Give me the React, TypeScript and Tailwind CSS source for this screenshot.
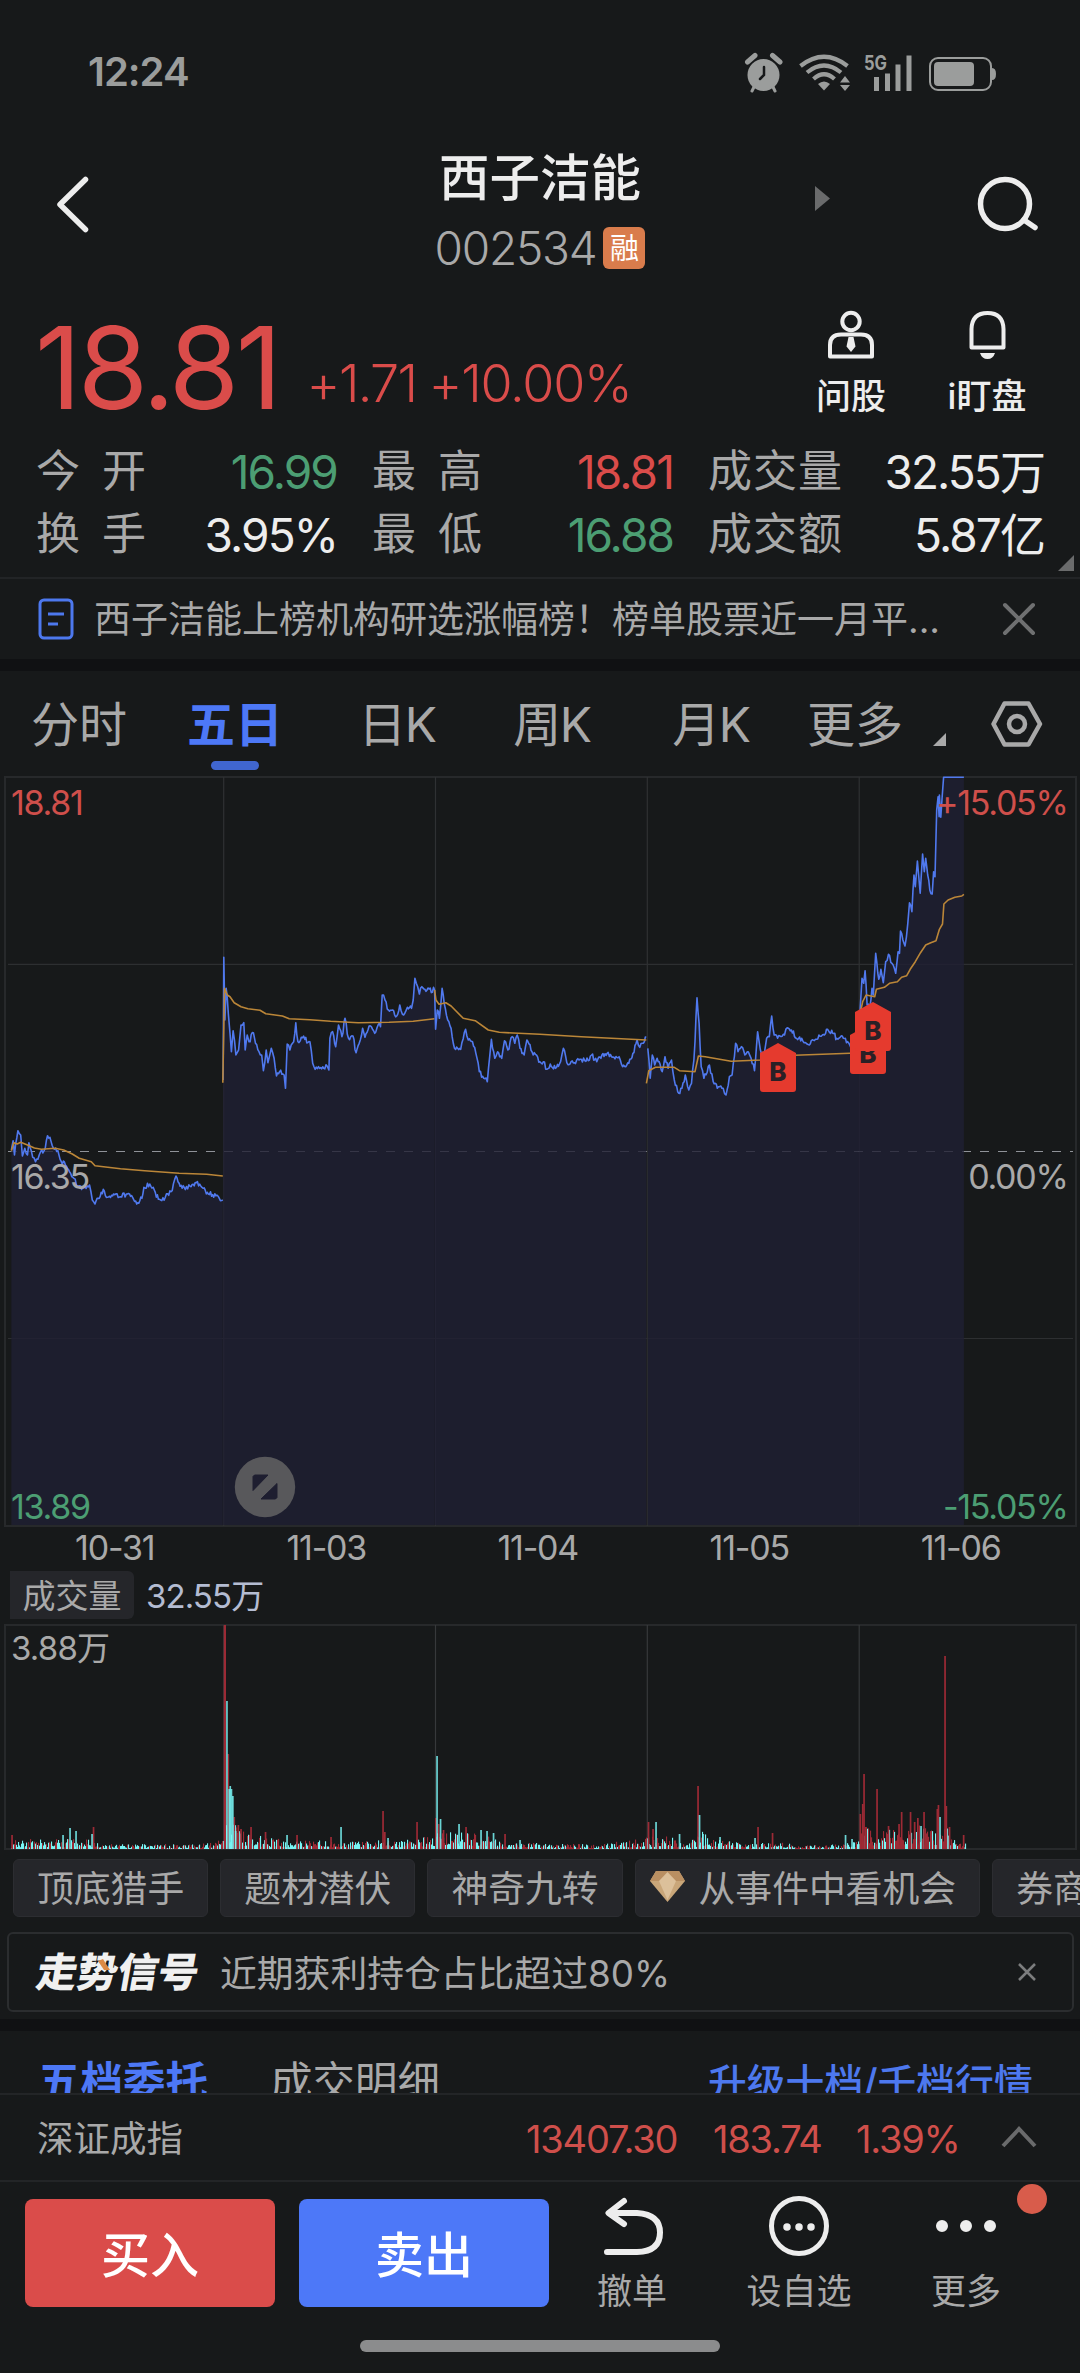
import React from 'react';

type Point = [number, number];

interface DayLine {
    ox: number;
    oy: number;
    price: string;
    avg: string;
}

// Samples are "x,y" pairs on a fine grid, (ox, oy) is the grid origin on the chart
const UNIT_X = 1 / 2.904;
const UNIT_Y = 1 / 3;

const days: DayLine[] = [
    {
        ox: 0,
        oy: 900,
        price: '33,750 38,722 42,765 52,692 60,705 65,768 72,745 80,765 84,728 95,772 103,785 110,778 118,755 128,752 138,707 145,712 155,745 168,752 178,785 190,795 205,820 215,835 225,860 240,862 260,855 268,900 276,912 285,895 300,868 312,892 330,882 350,890 370,882 385,892 400,908 412,895 418,862 435,852 448,870 460,898 480,892 500,872 511,828 520,850 535,862 555,860 570,848 590,865 605,882 630,885 640,902 647,900',
        avg: '33,752 40,728 50,732 60,727 80,735 100,744 120,748 160,745 185,750 210,762 230,775 265,785 276,797 350,806 420,812 520,820 600,823 647,828',
    },
    {
        ox: 0,
        oy: 900,
        price: '648,540 650,172 653,360 657,265 663,340 668,400 672,455 677,392 685,465 693,450 700,375 708,368 712,450 718,405 723,425 736,398 742,430 752,455 760,465 765,512 773,450 778,488 788,445 796,475 803,528 812,515 825,525 829,565 834,432 842,450 853,425 859,368 865,425 875,412 885,418 900,425 908,490 915,508 925,500 940,505 950,498 955,510 958,415 966,395 975,440 983,375 993,410 1002,355 1012,415 1025,408 1034,458 1043,430 1053,385 1060,412 1072,378 1088,400 1098,375 1105,380 1110,285 1118,300 1128,330 1140,330 1152,348 1161,315 1172,345 1183,322 1195,325 1200,300 1205,235 1213,260 1218,282 1225,260 1240,270 1262,270',
        avg: '647,548 652,265 660,285 668,290 680,308 700,320 720,326 755,331 772,341 820,348 840,356 900,359 960,364 1040,368 1130,367 1200,364 1262,356',
    },
    {
        ox: 0,
        oy: 900,
        price: '1262,270 1265,388 1270,330 1276,355 1284,265 1290,310 1300,360 1310,385 1320,445 1338,448 1352,388 1360,420 1372,425 1382,460 1392,515 1405,535 1415,545 1422,470 1427,418 1437,475 1445,455 1457,475 1465,422 1475,450 1487,410 1495,430 1502,405 1510,445 1522,465 1530,420 1545,455 1568,485 1578,485 1588,508 1598,492 1613,505 1628,485 1636,445 1646,488 1668,488 1688,478 1708,482 1718,465 1733,485 1748,465 1763,460 1783,472 1798,470 1808,500 1826,490 1838,460 1850,420 1858,442 1868,430 1877,412',
        avg: '1262,270 1266,300 1275,313 1295,308 1310,318 1345,355 1380,362 1418,390 1450,397 1568,403 1688,410 1877,420',
    },
    {
        ox: 540,
        oy: 760,
        price: '313,865 320,955 326,885 333,915 340,895 355,935 363,890 372,925 382,900 390,960 403,1000 412,985 422,945 432,990 440,970 447,900 456,713 462,790 468,920 476,955 492,915 503,965 515,985 532,985 540,1005 550,950 558,945 568,850 575,875 585,860 595,885 605,875 613,895 623,932 632,815 640,870 650,890 658,835 666,830 673,768 680,825 690,835 710,825 718,803 730,810 745,835 760,835 782,855 800,838 820,825 835,808 850,820 862,835 878,828 890,848 905,855 926,850',
        avg: '309,970 316,932 335,922 390,922 405,932 450,935 460,888 480,890 555,904 640,900 700,888 740,886 900,880 926,880',
    },
    {
        ox: 540,
        oy: 760,
        price: '926,850 930,745 935,655 940,670 944,632 950,735 958,740 964,685 968,705 975,580 984,658 990,628 997,668 1004,605 1012,583 1022,610 1033,640 1040,575 1044,580 1047,513 1054,540 1060,558 1068,490 1073,428 1080,455 1086,345 1090,380 1096,303 1104,400 1111,282 1116,335 1120,295 1126,345 1132,390 1139,402 1143,335 1147,350 1152,150 1156,110 1159,170 1160,105 1164,172 1172,52 1231,52',
        avg: '930,760 937,725 947,705 972,710 977,688 1000,682 1015,670 1038,665 1050,652 1065,647 1075,628 1090,605 1105,578 1120,555 1135,548 1150,542 1160,508 1169,492 1173,432 1185,420 1205,412 1225,408 1231,403',
    },
];

const CYAN = '#78f4f4';
const RED = '#9c2a35';

// [x, height] of the tall bars
const redSpikes: Point[] = [
    [12, 14], [93.5, 22], [228.2, 95], [234.2, 32], [238.3, 24], [241, 20], [251, 22], [265.5, 17], [297, 14],
    [331, 12], [383, 38], [384.8, 17], [417, 27], [435.8, 31], [438.6, 25], [443.5, 19], [466, 22], [505, 15],
    [648.5, 27], [653, 20], [698, 63], [758, 22], [772.5, 16], [860.3, 35], [862.7, 45], [864, 75], [866, 22],
    [877, 60], [888.5, 23], [899, 25], [901.6, 37], [910.5, 37], [914.6, 27], [917.8, 31], [924, 37], [938.4, 44],
    [937.3, 40], [945, 193], [946.3, 43], [949.5, 22], [963.6, 14],
];
const cyanSpikes: Point[] = [
    [63, 14], [70, 21], [76, 18], [92, 15], [226.9, 148], [229.2, 60], [230.2, 63], [231.4, 60], [232.8, 53],
    [235.6, 18], [287, 14], [341, 22], [388, 11], [437, 93], [440.5, 30], [459, 25], [481, 19], [487, 18],
    [493.5, 16], [520, 9], [656, 27], [679.5, 15], [699.5, 34], [703, 15], [720, 12], [755, 11], [845.5, 14],
    [852, 10], [921, 23], [940, 32],
];
const envelope: Point[] = [
    [11, 8], [40, 8], [90, 8], [100, 4], [200, 4], [222, 8], [226, 24], [236, 20], [250, 12], [270, 9], [330, 7],
    [400, 7], [430, 11], [445, 17], [465, 15], [482, 13], [500, 6], [530, 5], [600, 4], [635, 8], [660, 11],
    [690, 6], [703, 15], [712, 8], [750, 4], [775, 6], [800, 3], [845, 4], [858, 9], [862, 28], [868, 20],
    [880, 14], [920, 20], [935, 15], [946, 22], [952, 8], [967, 5],
];

const random = (seed: number) => {
    let s = seed;
    return () => {
        s = (s * 16807) % 2147483647;
        return s / 2147483647;
    };
};

const parse = (samples: string): Point[] =>
    samples.split(' ').map((p) => p.split(',').map(Number) as Point);

const withTicks = (points: Point[], seed: number): Point[] => {
    const next = random(seed);
    const out: Point[] = [points[0]];
    for (let i = 1; i < points.length; i++) {
        const [x0, y0] = points[i - 1];
        const [x1, y1] = points[i];
        const steps = Math.floor((x1 - x0) / 3);
        for (let k = 1; k < steps; k++) {
            const t = k / steps;
            const flat = y0 === 52 && y1 === 52;
            out.push([x0 + (x1 - x0) * t, y0 + (y1 - y0) * t + (flat ? 0 : (next() - 0.5) * 16)]);
        }
        out.push([x1, y1]);
    }
    return out;
};

const toPath = (points: Point[], day: DayLine) =>
    points
        .map(([x, y], i) => `${i ? 'L' : 'M'}${(day.ox + x * UNIT_X).toFixed(1)} ${(day.oy + y * UNIT_Y).toFixed(1)}`)
        .join('');

const heightAt = (x: number) => {
    const i = envelope.findIndex(([ex]) => ex >= x);
    if (i <= 0) return 5;
    const [x0, h0] = envelope[i - 1];
    const [x1, h1] = envelope[i];
    return h0 + ((h1 - h0) * (x - x0)) / (x1 - x0);
};

const dayLines = [223.7, 435.5, 647.3, 859.2];

const Marker: React.FC<{ x: number; y: number }> = ({ x, y }) => (
    <g transform={`translate(${x} ${y})`}>
        <path d="M18 0 L36 10 V46 Q36 49 33 49 H3 Q0 49 0 46 V10 Z" fill="#e53a2e" />
        <text x="18" y="37.5" textAnchor="middle" fontSize="26" fontWeight="800" fill="#2a2026">B</text>
    </g>
);

const PriceChart: React.FC = () => (
    <svg className="block w-[1080px] h-[752px] shrink-0" viewBox="0 776 1080 752">
        <g fill="none" stroke="#27292b" strokeWidth="2">
            <rect x="5" y="777" width="1071" height="749" />
            <path d="M8 964.3H1073M8 1338.5H1073" stroke="#2d2f31" strokeWidth="1.2" />
            {dayLines.map((x) => <path key={x} d={`M${x} 777V1526`} stroke="#2f3133" strokeWidth="1.2" />)}
        </g>
        <path d="M8 1151.5H1073" stroke="#8f9298" strokeWidth="1.2" strokeDasharray="9 9" />
        {days.map((day, i) => {
            const points = withTicks(parse(day.price), 71 + i * 13);
            const line = toPath(points, day);
            const x0 = day.ox + points[0][0] * UNIT_X;
            const x1 = day.ox + points[points.length - 1][0] * UNIT_X;
            return (
                <g key={i} fill="none" strokeLinejoin="round">
                    <path d={`${line}L${x1} 1525L${x0} 1525Z`} fill="#1f1f33" fillOpacity="0.8" />
                    <path d={line} stroke="#5079ee" strokeWidth="1.6" />
                    <path d={toPath(parse(day.avg), day)} stroke="#bb8638" strokeWidth="1.6" />
                </g>
            );
        })}
        <Marker x={760} y={1043} />
        <Marker x={850} y={1025} />
        <Marker x={855} y={1002} />
        <circle cx="265" cy="1487" r="30.2" fill="#58585b" />
        <path d="M254.500 1475H268L253 1490.500V1476.500ZM277 1483.500V1497.500L275.500 1499H261Z" fill="#1e1e30" stroke="#1e1e30" strokeLinejoin="round" />
        <g fontSize="34" letterSpacing="-1.3">
            <text x="11" y="815" fill="#cf4f4b">18.81</text>
            <text x="11" y="1188.500" fill="#a9a9a9">16.35</text>
            <text x="11" y="1518.500" fill="#4c9e73">13.89</text>
            <g textAnchor="end">
                <text x="1067.500" y="815" fill="#cf4f4b">+15.05%</text>
                <text x="1067.500" y="1188.500" fill="#a9a9a9">0.00%</text>
                <text x="1067.500" y="1518.500" fill="#4c9e73">-15.05%</text>
            </g>
        </g>
    </svg>
);

const VolumeChart: React.FC = () => {
    const next = random(4241);
    const bars: React.ReactNode[] = [];
    for (let x = 11; x < 966; x += 1) {
        const h = Math.max(1, heightAt(x) * (0.2 + Math.pow(next(), 1.4) * 1.05));
        const late = x > 858 ? 0.66 : 0.44;
        bars.push(<rect key={x} x={x} y={1849 - h} width="1.1" height={h} fill={next() < late ? RED : CYAN} />);
    }
    return (
        <svg className="block w-[1080px] h-[228px] shrink-0" viewBox="0 1623 1080 228">
            <g fill="none" stroke="#27292b" strokeWidth="2">
                <rect x="5" y="1625" width="1071" height="224" />
                {dayLines.map((x) => <path key={x} d={`M${x} 1625V1849`} stroke="#37393b" strokeWidth="1.2" />)}
            </g>
            {bars}
            <rect x="223.800" y="1625" width="2.200" height="224" fill={RED} />
            {redSpikes.map(([x, h]) => <rect key={x} x={x - 0.8} y={1849 - h} width="1.7" height={h} fill={RED} />)}
            {cyanSpikes.map(([x, h]) => <rect key={x} x={x - 0.8} y={1849 - h} width="1.7" height={h} fill={CYAN} fillOpacity="0.85" />)}
            <text x="11" y="1660" fontSize="33" letterSpacing="-0.8" fill="#a9a9a9">3.88万</text>
        </svg>
    );
};

const StatusBar: React.FC = () => (
    <div className="flex h-[142px] shrink-0 items-center justify-between pl-[88px] pr-[83px] text-[#9b9d9c]">
        <span className="pt-[1px] text-[40px] font-semibold tracking-[-1px]">12:24</span>
        <svg className="h-[60px] w-[280px] mr-[-13px]" viewBox="0 0 280 60" fill="none" stroke="currentColor">
            <circle cx="33.500" cy="34" r="16" fill="currentColor" stroke="none" />
            <path d="M17.500 21L25 14.500M50 21L42.500 14.500" strokeWidth="5" strokeLinecap="round" />
            <path d="M24.500 45L22 50M42.500 45L45 50" strokeWidth="3" strokeLinecap="round" />
            <path d="M34 26V34L30 38" stroke="#17191a" strokeWidth="2.500" strokeLinecap="round" />
            <path d="M70.500 25Q94 6.500 117.500 25M77 31.500Q94 17.500 111 31.500M83.500 38Q94 28.500 104.500 38" strokeWidth="4.200" />
            <path d="M88 43Q94 38 100 43L94 49.500Z" fill="currentColor" stroke="none" />
            <path d="M110 41.500L115 35L120 41.500ZM110 44L115 50L120 44Z" fill="currentColor" stroke="none" />
            <text x="134" y="28.500" fontSize="20" fontWeight="700" textLength="23" lengthAdjust="spacingAndGlyphs" fill="currentColor" stroke="none">5G</text>
            <path d="M146.500 36V50M157.500 32.500V50M168 23.500V50M179 14.500V50" strokeWidth="5" />
            <rect x="200" y="17" width="61" height="32" rx="8" strokeWidth="2" />
            <rect x="204" y="21" width="40" height="24" rx="4" fill="currentColor" stroke="none" />
            <path d="M262 27Q266 27 266 33Q266 39 262 39Z" fill="currentColor" stroke="none" />
        </svg>
    </div>
);

const Header: React.FC = () => (
    <div className="flex h-[144px] shrink-0 items-start">
        <div className="w-[340px] pl-[50px] pt-[27px]">
            <svg width="46" height="70" viewBox="0 0 46 70" fill="none" stroke="#ededed" strokeWidth="5.500" strokeLinecap="round" strokeLinejoin="round">
                <path d="M35.500 10.500L10 35.500L35.500 60.500" />
            </svg>
        </div>
        <div className="flex w-[400px] flex-col items-center pt-[1px]">
            <h1 className="text-[50.5px] leading-[69px] font-medium text-[#ededed]">西子洁能</h1>
            <div className="flex h-[72px] items-center gap-[7px]">
                <span className="text-[46px] font-light tracking-[-1.2px] text-[#a9a9a9]">002534</span>
                <span className="flex h-[42px] w-[42px] items-center justify-center rounded-md bg-[#d97c4c] text-[29px] leading-none text-white">融</span>
            </div>
        </div>
        <svg className="ml-[75px] mt-[44px]" width="16" height="25" viewBox="0 0 16 25"><path d="M0 0L15 12.500L0 25Z" fill="#6a6b6c" /></svg>
        <svg className="ml-[140px] mt-[27px]" width="76" height="76" viewBox="0 0 76 76" fill="none" stroke="#ededed" strokeWidth="5.500">
            <circle cx="34" cy="35" r="24.500" />
            <path d="M53 51L64 58.500" strokeLinecap="round" />
        </svg>
    </div>
);

const PriceRow: React.FC = () => (
    <div className="flex h-[153px] shrink-0 items-start">
        <div className="flex w-[800px] items-start pl-[35px] text-[#da4c4a]">
            <span className="pt-[12px] text-[114px] leading-[140px] tracking-[-3.6px]">18.81</span>
            <span className="ml-[28px] pt-[63px] text-[52px] leading-[70px] font-light tracking-[-1.6px]">+1.71</span>
            <span className="ml-[12px] pt-[63px] text-[52px] leading-[70px] font-light tracking-[-1.2px]">+10.00%</span>
        </div>
        <div className="flex w-[102px] flex-col items-center pt-[23px]">
            <svg width="50" height="52" viewBox="0 0 50 52" fill="none" stroke="#ededed" strokeWidth="4">
                <circle cx="25" cy="12.500" r="8.700" />
                <path d="M4 47.500V36Q4 25.500 15 25.500H35Q46 25.500 46 36V47.500Z" strokeLinejoin="round" />
                <path d="M22.500 28H27.500L29.500 37.500L25 43L20.500 37.500Z" fill="#ededed" stroke="none" />
            </svg>
            <span className="mt-[13px] text-[35px] leading-[44px] font-medium text-[#ededed]">问股</span>
        </div>
        <div className="ml-[34px] flex w-[102px] flex-col items-center pt-[23px]">
            <svg width="50" height="52" viewBox="0 0 50 52" fill="none" stroke="#ededed" strokeWidth="4">
                <path d="M9.500 38.500V20Q10 4 25.500 4Q41 4 41.500 20V38.500Z" strokeLinejoin="round" />
                <path d="M18 44H33Q31 50 25.500 50Q20 50 18 44Z" fill="#ededed" stroke="none" />
            </svg>
            <span className="mt-[13px] text-[35px] leading-[44px] font-medium whitespace-nowrap text-[#ededed]">i盯盘</span>
        </div>
    </div>
);

const stats = [
    { label: '今开', value: '16.99', color: 'text-[#4c9e73]' },
    { label: '最高', value: '18.81', color: 'text-[#da4c4a]' },
    { label: '成交量', value: '32.55万', color: 'text-[#ededed]' },
    { label: '换手', value: '3.95%', color: 'text-[#ededed]' },
    { label: '最低', value: '16.88', color: 'text-[#4c9e73]' },
    { label: '成交额', value: '5.87亿', color: 'text-[#ededed]' },
];

const Stats: React.FC = () => (
    <div className="relative h-[138px] shrink-0">
        <div className="grid grid-cols-[300px_300px_335px] gap-x-[36px] pl-[36px]">
            {stats.map((s) => (
                <div key={s.label} className="flex h-[63px] items-center justify-between text-[44px] leading-none">
                    <span className={`flex justify-between text-[#a9a9a9] ${s.label.length === 2 ? 'w-[110px]' : 'w-[134px]'}`}>
                        {s.label.split('').map((c) => <span key={c}>{c}</span>)}
                    </span>
                    <span className={`-mr-[1px] pt-[2px] text-[46px] tracking-[-1.9px] ${s.color}`}>{s.value}</span>
                </div>
            ))}
        </div>
        <svg className="absolute right-[6px] bottom-[6px]" width="16" height="16" viewBox="0 0 16 16"><path d="M16 0V16H0Z" fill="#6a6b6c" /></svg>
    </div>
);

const NewsBar: React.FC = () => (
    <div className="flex h-[82px] shrink-0 items-center border-t-2 border-[#222426] pl-[38px]">
        <svg width="36" height="42" viewBox="0 0 36 42" fill="none" stroke="#4d78ee" strokeWidth="3">
            <rect x="2" y="2" width="32" height="38" rx="4" />
            <path d="M10 16H26M10 26H20" />
        </svg>
        <span className="ml-[20px] w-[880px] text-[37px] leading-none whitespace-nowrap text-[#a9a9a9]">西子洁能上榜机构研选涨幅榜！榜单股票近一月平...</span>
        <svg className="ml-[28px]" width="34" height="34" viewBox="0 0 34 34" stroke="#6f7071" strokeWidth="4" strokeLinecap="round">
            <path d="M3 3L31 31M31 3L3 31" />
        </svg>
    </div>
);

const tabs = [
    { name: '分时', width: 'w-[158px]' },
    { name: '五日', width: 'w-[154px]', active: true },
    { name: '日K', width: 'w-[170px]' },
    { name: '周K', width: 'w-[140px]' },
    { name: '月K', width: 'w-[178px]' },
    { name: '更多', width: 'w-[110px]' },
];

const Tabs: React.FC = () => (
    <div className="flex h-[105px] shrink-0">
        {tabs.map((t) => (
            <div key={t.name} className={`flex flex-col items-center pt-[22px] text-[48px] leading-[64px] ${t.width} ${t.active ? 'font-bold text-[#4d78f6]' : 'text-[#a9a9a9]'}`}>
                <span className={t.name.includes('K') ? 'tracking-[-1.5px] whitespace-nowrap' : 'whitespace-nowrap'}>{t.name}</span>
                {t.active && <span className="mt-[4px] h-[9px] w-[48px] rounded-full bg-[#4066cf]" />}
            </div>
        ))}
        <svg className="ml-[23px] mt-[62px]" width="13" height="13" viewBox="0 0 13 13"><path d="M13 0V13H0Z" fill="#a9a9a9" /></svg>
        <svg className="ml-[44px] mt-[28px]" width="54" height="50" viewBox="0 0 54 50" fill="none" stroke="#a9a9a9" strokeWidth="4.500" strokeLinejoin="round">
            <path d="M14.500 4.500H38.500L50 25L38.500 45.500H14.500L3.500 25Z" />
            <circle cx="27" cy="25" r="8" />
        </svg>
    </div>
);

const Chip: React.FC<{ children: React.ReactNode }> = ({ children }) => (
    <div className="flex h-[58px] shrink-0 items-center rounded-md border border-[#2c2d31] bg-[#25262a] px-[23px] pt-[3px] text-[36.8px] leading-none whitespace-nowrap text-[#a9a9a9]">
        {children}
    </div>
);

const Chips: React.FC = () => (
    <div className="flex h-[66px] shrink-0 gap-[12px] overflow-hidden pl-[13px] pt-[8px]">
        <Chip>顶底猎手</Chip>
        <Chip>题材潜伏</Chip>
        <Chip>神奇九转</Chip>
        <Chip>
            <svg className="mr-[14px] ml-[-9px] mb-[7px]" width="35" height="31" viewBox="0 0 35 31">
                <path d="M6 0H29L35 10L17.500 31L0 10Z" fill="#c9a679" />
                <path d="M6 0H29L35 10H0Z" fill="#b98f62" />
                <path d="M9 10L17.500 1L26 10L17.500 29Z" fill="#dcc09a" />
            </svg>
            从事件中看机会
        </Chip>
        <Chip>券商</Chip>
    </div>
);

const SignalCard: React.FC = () => (
    <div className="ml-[7px] mr-[6px] mt-[15px] mb-[7px] flex h-[80px] shrink-0 items-center rounded-md border-2 border-[#2b2d2f] pl-[28px]">
        <div className="relative w-[162px] pt-[2px]">
            <span className="inline-block -skew-x-10 text-[40.5px] leading-none font-black whitespace-nowrap text-[#f0f0f0]">走势信号</span>
            <svg className="absolute top-[8px] left-[61px]" width="12" height="14" viewBox="0 0 12 14"><path d="M0 2L5 0L12 11L6 11Z" fill="#dc8a45" /></svg>
        </div>
        <span className="ml-[21px] w-[783px] pt-[4px] text-[36.8px] leading-none text-[#a9a9a9]">近期获利持仓占比超过80%</span>
        <svg className="ml-[14px]" width="20" height="20" viewBox="0 0 20 20" stroke="#7c7d7e" strokeWidth="2.500">
            <path d="M2 2L18 18M18 2L2 18" />
        </svg>
    </div>
);

const OrderBookTabs: React.FC = () => (
    <div className="flex h-[62px] shrink-0 items-start overflow-hidden pl-[38px] pt-[26px] text-[42.5px] leading-[50px]">
        <span className="w-[232px] font-bold text-[#4d78f6]">五档委托</span>
        <span className="w-[438px] text-[#a9a9a9]">成交明细</span>
        <span className="text-[38.8px] leading-[51px] font-medium whitespace-nowrap text-[#4d78ee]">升级十档/千档行情</span>
    </div>
);

const IndexBar: React.FC = () => (
    <div className="flex h-[87px] shrink-0 items-center border-t-2 border-[#232527] pl-[37px] pt-[4px] text-[38px] tracking-[-1.2px] text-[#cf4f4b]">
        <span className="w-[489px] text-[36.5px] tracking-normal text-[#a9a9a9]">深证成指</span>
        <span className="w-[187px]">13407.30</span>
        <span className="w-[143px]">183.74</span>
        <span className="w-[145px]">1.39%</span>
        <svg className="mb-[6px]" width="36" height="24" viewBox="0 0 36 24" fill="none" stroke="#6a6b6c" strokeWidth="4">
            <path d="M2 21L18 4L34 21" />
        </svg>
    </div>
);

const actions = [
    {
        name: '撤单',
        width: 'w-[120px]',
        icon: <path d="M26 6L10.500 18L26 29M12 18H39Q62 19.500 62 37.500Q62 56.500 39 57H9" strokeWidth="6" strokeLinejoin="round" strokeLinecap="round" />,
    },
    {
        name: '设自选',
        width: 'w-[214px]',
        icon: (
            <>
                <circle cx="34" cy="31" r="27.500" strokeWidth="5" />
                <path d="M22 32H22.010M34 32H34.010M46 32H46.010" strokeWidth="7.500" strokeLinecap="round" />
            </>
        ),
    },
    {
        name: '更多',
        width: 'w-[120px]',
        icon: <path d="M10 31H10.010M34 31H34.010M58 31H58.010" strokeWidth="12" strokeLinecap="round" />,
    },
];

const BottomBar: React.FC = () => (
    <div className="relative flex h-[193px] shrink-0 items-start border-t-2 border-[#232527] pl-[25px]">
        <button className="mt-[17px] h-[108px] w-[250px] rounded-lg bg-[#da4c4a] pt-[5px] text-[49px] font-medium text-white">买入</button>
        <button className="mt-[17px] ml-[24px] h-[108px] w-[250px] rounded-lg bg-[#4d78f8] pt-[5px] text-[49px] font-medium text-white">卖出</button>
        <div className="ml-[23px] flex pt-[13px]">
            {actions.map((a) => (
                <div key={a.name} className={`flex flex-col items-center text-[35px] leading-[46px] text-[#a9a9a9] ${a.width}`}>
                    <svg width="68" height="62" viewBox="0 0 68 62" fill="none" stroke="#ededed">{a.icon}</svg>
                    <span className="mt-[11px]">{a.name}</span>
                </div>
            ))}
        </div>
        <span className="absolute top-[2px] left-[1017px] h-[30px] w-[30px] rounded-full bg-[#d85c4b]" />
        <span className="absolute bottom-[21px] left-[360px] h-[12px] w-[360px] rounded-full bg-[#8b8c8d]" />
    </div>
);

const App: React.FC = () => {
    return (
        <div className="flex h-[2373px] w-[1080px] flex-col overflow-hidden bg-[#17191a] font-['Inter','Noto_Sans_CJK_SC',sans-serif]">
            <StatusBar />
            <Header />
            <PriceRow />
            <Stats />
            <NewsBar />
            <div className="h-[12px] shrink-0 bg-[#101113]" />
            <Tabs />
            <PriceChart />
            <div className="flex h-[39px] shrink-0 items-center pl-[9px] text-[34px] tracking-[-1.2px] text-[#a9a9a9]">
                {['10-31', '11-03', '11-04', '11-05', '11-06'].map((d) => (
                    <span key={d} className="w-[211.5px] text-center">{d}</span>
                ))}
            </div>
            <div className="flex h-[56px] shrink-0 items-center pl-[10px] text-[33px]">
                <span className="flex h-[48px] w-[124px] items-center justify-center rounded-r-md bg-[#25262a] pt-[4px] text-[#a9a9a9]">成交量</span>
                <span className="ml-[12px] pt-[4px] tracking-[-0.9px] text-[#b4bcd2]">32.55万</span>
            </div>
            <VolumeChart />
            <Chips />
            <SignalCard />
            <div className="h-[12px] shrink-0 bg-[#101113]" />
            <OrderBookTabs />
            <IndexBar />
            <BottomBar />
        </div>
    );
};

export default App;
